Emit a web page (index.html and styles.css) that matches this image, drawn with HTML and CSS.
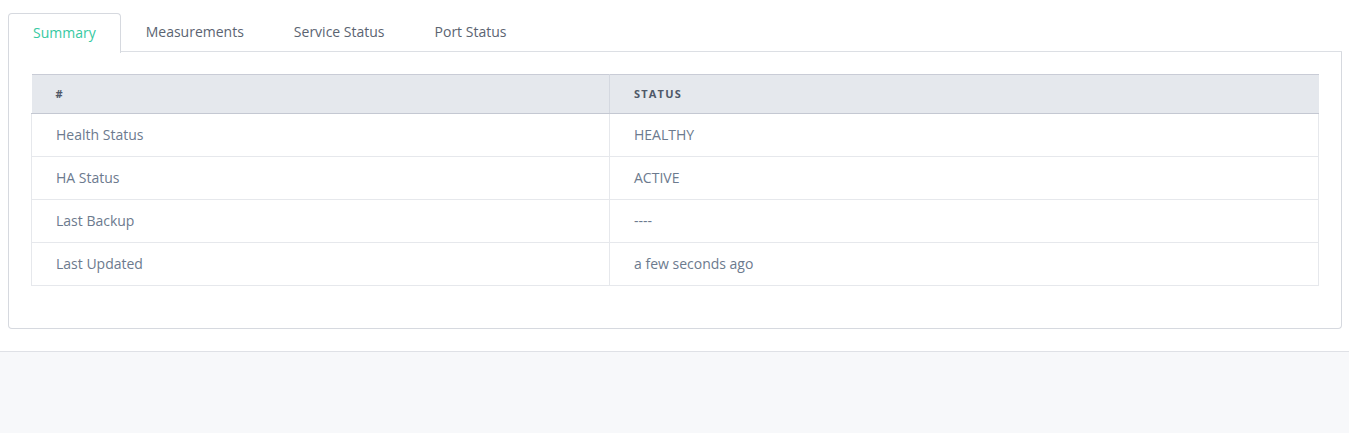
FILE: index.html
```html
<!DOCTYPE html>
<html>
<head>
<meta charset="utf-8">
<link rel="stylesheet" href="styles.css">
</head>
<body>
<div class="top">
  <div class="tabs">
    <div class="tab active">Summary</div>
    <div class="tab">Measurements</div>
    <div class="tab">Service Status</div>
    <div class="tab">Port Status</div>
  </div>
  <div class="panel">
    <table class="grid">
      <thead>
        <tr><th class="c1">#</th><th>Status</th></tr>
      </thead>
      <tbody>
        <tr><td class="c1">Health Status</td><td>HEALTHY</td></tr>
        <tr><td class="c1">HA Status</td><td>ACTIVE</td></tr>
        <tr><td class="c1">Last Backup</td><td>----</td></tr>
        <tr><td class="c1">Last Updated</td><td>a few seconds ago</td></tr>
      </tbody>
    </table>
  </div>
</div>
<div class="bottom"></div>
</body>
</html>
```
FILE: styles.css
```css
html, body {
  margin: 0;
  padding: 0;
  background: #ffffff;
  font-family: "Open Sans", "Noto Sans", sans-serif;
  font-size: 14px;
}
.top {
  padding: 13px 7px 22px 8px;
  border-bottom: 1px solid #dfe1e6;
  background: #ffffff;
}
.tabs {
  display: flex;
  height: 38px;
  border-bottom: 1px solid #dcdfe4;
}
.tab {
  padding: 0 24px 3px 24px;
  border: 1px solid transparent;
  border-bottom: none;
  display: flex;
  align-items: center;
  color: #5b6472;
  border-radius: 4px 4px 0 0;
}
.tab.active {
  color: #36c9a2;
  border-color: #d6d9df;
  background: #fff;
  height: 36px;
  margin-bottom: -1px;
}
.panel {
  border: 1px solid #d6d9df;
  border-top: none;
  border-radius: 0 0 4px 4px;
  padding: 22px 22px 42px 22px;
}
.grid {
  width: 100%;
  border-collapse: collapse;
}
.grid th {
  background: #e5e8ed;
  border-top: 1px solid #c9ccd6;
  border-bottom: 1px solid #c4c8d2;
  height: 36px;
  text-align: left;
  padding: 0 24px 2px 24px;
  font-size: 11px;
  font-weight: 700;
  letter-spacing: 1.2px;
  text-transform: uppercase;
  color: #4f5868;
}
.grid th.c1 {
  border-right: 1px solid #d4d8e0;
}
.grid td {
  height: 40px;
  padding: 0 24px 2px 24px;
  border: 1px solid #e6e8ec;
  color: #6c7a8e;
}
.grid .c1 {
  width: 529px;
}
.bottom {
  height: 82px;
  background: #f7f8fa;
}
```
